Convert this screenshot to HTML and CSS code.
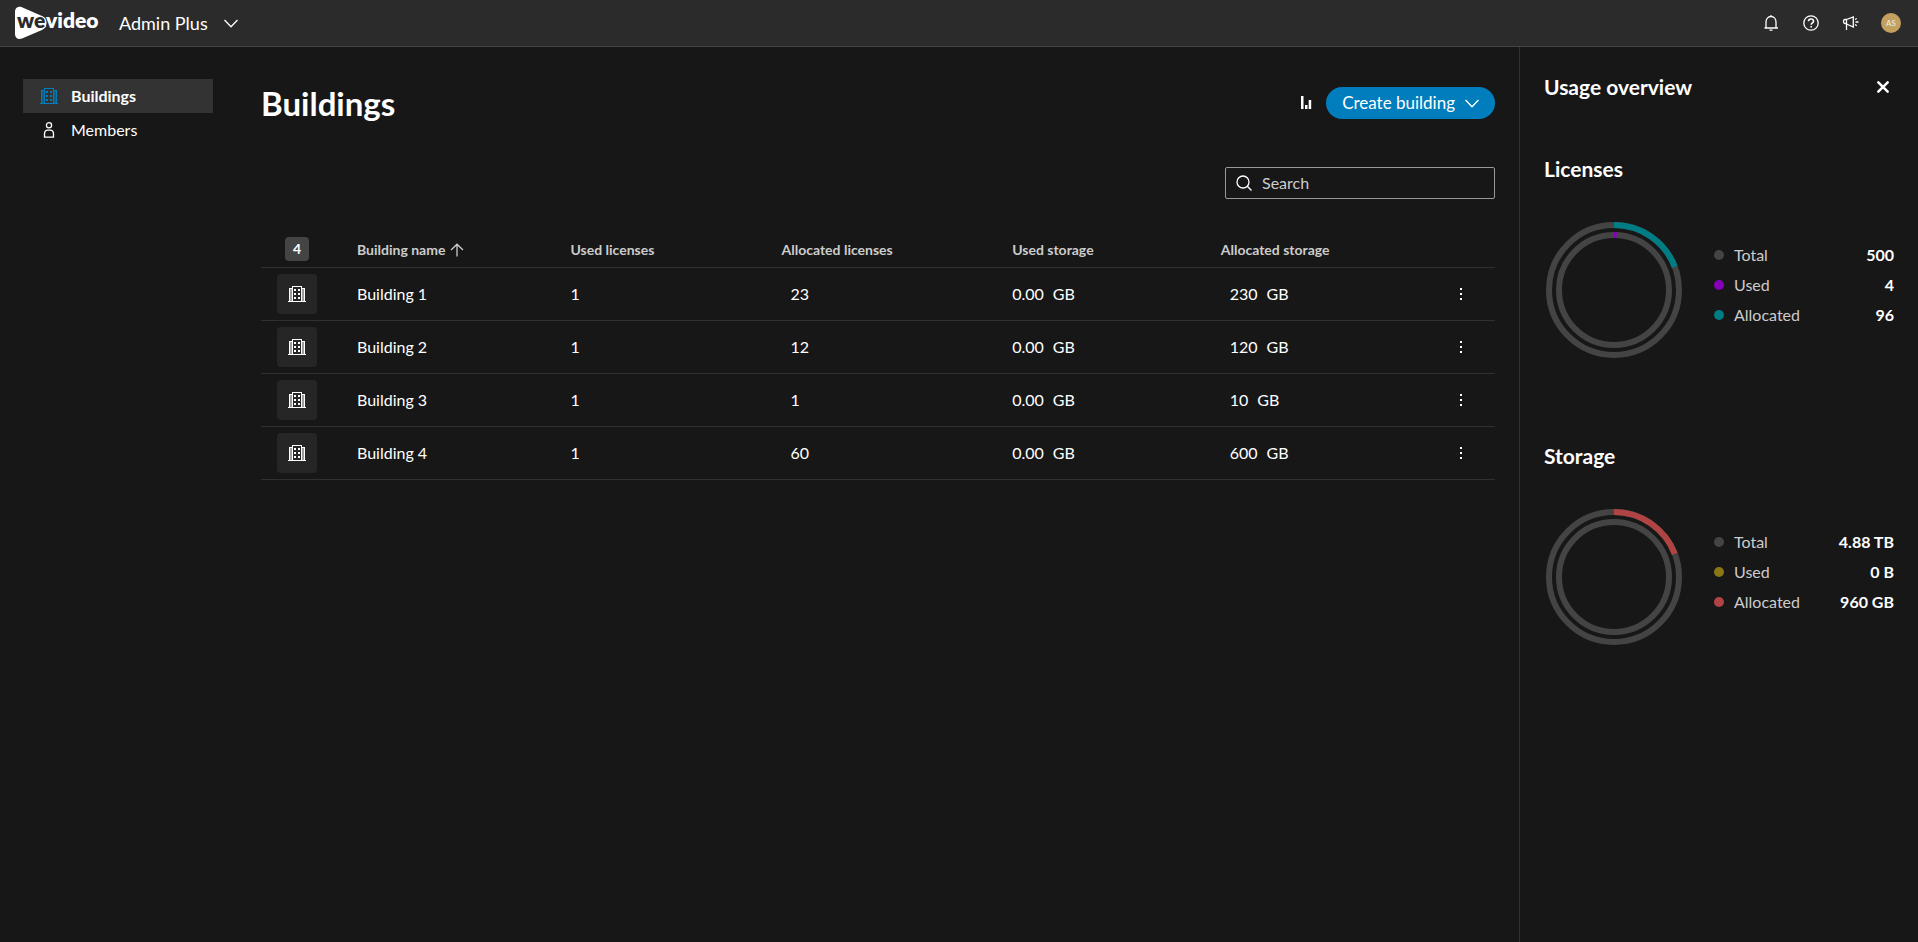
FILE: index.html
```html
<!DOCTYPE html>
<html lang="en">
  <head>
    <meta charset="UTF-8" />
    <meta name="viewport" content="width=device-width, initial-scale=1.0" />
    <title>Buildings - WeVideo</title>
    <link rel="stylesheet" href="styles.css" />
  </head>
  <body>
    <!-- shared icons -->
    <svg width="0" height="0" class="sprite" aria-hidden="true">
      <symbol id="icon-building" viewBox="0 0 20 20">
        <path fill="currentColor" d="M5 2h10v1H5zM5 2h1v15H5zM14 2h1v15h-1zM2 4h3v1H3v12H2zM18 4h-3v1h2v12h1zM1 17h18v1H1z" />
        <path fill="currentColor" d="M7 5h2v2H7zM11 5h2v2h-2zM7 9h2v2H7zM11 9h2v2h-2zM7 13h2v2H7zM11 13h2v2h-2z" />
        <path fill="currentColor" opacity=".55" d="M3 5h2v12H3zM15 5h2v12h-2z" />
      </symbol>
      <symbol id="icon-chevron" viewBox="0 0 14 9">
        <path fill="none" stroke="currentColor" stroke-width="1.300" d="M.5 1 7 7.700 13.500 1" />
      </symbol>
      <symbol id="icon-more" viewBox="0 0 14 14">
        <path fill="currentColor" d="M6 1h2v2H6zM6 6h2v2H6zM6 11h2v2H6z" />
      </symbol>
    </svg>

    <header class="topbar">
      <a href="#" class="logo" aria-label="WeVideo">
        <svg width="86" height="34" viewBox="0 0 86 34">
          <path fill="#fff" d="M0 5.500C0 1.500 3.500 0 7 1.200L27 10c6 3 6 11 0 14L7 32.500C3.500 34 0 32 0 28z" />
          <text x="2" y="22" class="logo-we">we</text>
          <text x="31" y="22" class="logo-video">video</text>
        </svg>
      </a>
      <button class="product-menu">
        Admin Plus
        <svg width="14" height="9"><use href="#icon-chevron" /></svg>
      </button>
      <div class="topbar-actions">
        <button class="icon-button" aria-label="Notifications">
          <svg width="20" height="20" viewBox="0 0 20 20" fill="none" stroke="currentColor" stroke-width="1.300">
            <path d="M3.500 15h13.500M5 14.500V9c0-3 2-5.500 5-5.500S15 6 15 9v5.500l1.500.5M5 14.500l-1.500.5M8.500 17.200h3M10 2v1.500" />
          </svg>
        </button>
        <button class="icon-button" aria-label="Help">
          <svg width="20" height="20" viewBox="0 0 20 20" fill="none" stroke="currentColor" stroke-width="1.300">
            <circle cx="10" cy="10" r="7.200" />
            <path stroke-width="1.600" d="M7.500 8.300C7.500 6.800 8.500 6 10 6s2.500.9 2.500 2.200c0 1.600-2.300 1.700-2.300 3.500M10.200 12.900v1.600" />
          </svg>
        </button>
        <button class="icon-button" aria-label="What's new">
          <svg width="20" height="20" viewBox="0 0 20 20" fill="none" stroke="currentColor" stroke-width="1.300">
            <path d="M5.500 6.500H4C2.800 6.500 2.500 7.300 2.500 8.500s.4 2 1.500 2h1.500M5.500 6.500 12.300 4v10L5.500 11M5.500 6.500v10.500M14 6.500l1.800-1M14.500 9h3M14 11.500l1.800 1.200" />
          </svg>
        </button>
        <button class="avatar">AS</button>
      </div>
    </header>

    <div class="layout">
      <nav class="sidebar">
        <a href="#" class="nav-item active">
          <svg width="20" height="20"><use href="#icon-building" /></svg>
          Buildings
        </a>
        <a href="#" class="nav-item">
          <svg width="20" height="20" viewBox="0 0 20 20" fill="none" stroke="currentColor" stroke-width="1.300">
            <circle cx="10" cy="5.200" r="2.600" />
            <path d="M5.500 17.200v-3c0-2.500 1.500-4 3.200-4h2.600c1.700 0 3.200 1.500 3.200 4v3z" />
          </svg>
          Members
        </a>
      </nav>

      <main class="content">
        <div class="page-header">
          <h1>Buildings</h1>
          <div class="page-actions">
            <button class="icon-button" aria-label="Usage overview">
              <svg width="20" height="20" viewBox="0 0 20 20">
                <path fill="currentColor" d="M5 3h2.500v13H5zM9 12h2.500v4H9zM12.700 7h2.500v9h-2.500z" />
              </svg>
            </button>
            <button class="primary-button">
              Create building
              <svg width="14" height="9"><use href="#icon-chevron" /></svg>
            </button>
          </div>
        </div>

        <label class="search">
          <svg width="16" height="16" viewBox="0 0 16 16" fill="none" stroke="currentColor" stroke-width="1.300">
            <circle cx="7" cy="7" r="6" />
            <path d="m11.300 11.300 4.200 4.200" />
          </svg>
          <input type="text" placeholder="Search" aria-label="Search" />
        </label>

        <table class="buildings">
          <colgroup>
            <col class="col-icon" />
            <col class="col-name" />
            <col class="col-used-licenses" />
            <col class="col-allocated-licenses" />
            <col class="col-used-storage" />
            <col />
            <col class="col-menu" />
          </colgroup>
          <thead>
            <tr>
              <th><span class="count">4</span></th>
              <th>
                <span class="sort">
                  Building name
                  <svg width="14" height="14" viewBox="0 0 14 14" fill="none" stroke="currentColor" stroke-width="1.300">
                    <path d="M7 13.500V1.500M1 7l6-5.800L13 7" />
                  </svg>
                </span>
              </th>
              <th>Used licenses</th>
              <th>Allocated licenses</th>
              <th>Used storage</th>
              <th>Allocated storage</th>
              <th></th>
            </tr>
          </thead>
          <tbody>
            <tr>
              <td><span class="tile"><svg width="20" height="20"><use href="#icon-building" /></svg></span></td>
              <td>Building 1</td>
              <td>1</td>
              <td class="editable">23</td>
              <td><span class="size">0.00 <span>GB</span></span></td>
              <td class="editable"><span class="size">230 <span>GB</span></span></td>
              <td><button class="icon-button" aria-label="More options"><svg width="14" height="14"><use href="#icon-more" /></svg></button></td>
            </tr>
            <tr>
              <td><span class="tile"><svg width="20" height="20"><use href="#icon-building" /></svg></span></td>
              <td>Building 2</td>
              <td>1</td>
              <td class="editable">12</td>
              <td><span class="size">0.00 <span>GB</span></span></td>
              <td class="editable"><span class="size">120 <span>GB</span></span></td>
              <td><button class="icon-button" aria-label="More options"><svg width="14" height="14"><use href="#icon-more" /></svg></button></td>
            </tr>
            <tr>
              <td><span class="tile"><svg width="20" height="20"><use href="#icon-building" /></svg></span></td>
              <td>Building 3</td>
              <td>1</td>
              <td class="editable">1</td>
              <td><span class="size">0.00 <span>GB</span></span></td>
              <td class="editable"><span class="size">10 <span>GB</span></span></td>
              <td><button class="icon-button" aria-label="More options"><svg width="14" height="14"><use href="#icon-more" /></svg></button></td>
            </tr>
            <tr>
              <td><span class="tile"><svg width="20" height="20"><use href="#icon-building" /></svg></span></td>
              <td>Building 4</td>
              <td>1</td>
              <td class="editable">60</td>
              <td><span class="size">0.00 <span>GB</span></span></td>
              <td class="editable"><span class="size">600 <span>GB</span></span></td>
              <td><button class="icon-button" aria-label="More options"><svg width="14" height="14"><use href="#icon-more" /></svg></button></td>
            </tr>
          </tbody>
        </table>
      </main>

      <aside class="usage">
        <div class="usage-header">
          <h2>Usage overview</h2>
          <button class="icon-button" aria-label="Close">
            <svg width="20" height="20" viewBox="0 0 20 20" fill="none" stroke="currentColor" stroke-width="2.500" stroke-linecap="round">
              <path d="m5.300 5.300 9.400 9.400M14.700 5.300l-9.400 9.400" />
            </svg>
          </button>
        </div>

        <section class="usage-section">
          <h2>Licenses</h2>
          <div class="usage-body">
            <svg class="donut" width="140" height="140" viewBox="0 0 140 140">
              <circle class="track" cx="70" cy="70" r="65" />
              <circle class="track" cx="70" cy="70" r="55" />
              <g transform="rotate(-90 70 70)">
                <circle class="licenses-allocated" cx="70" cy="70" r="65" pathLength="500" stroke-dasharray="96 404" />
                <circle class="licenses-used" cx="70" cy="70" r="55" pathLength="500" stroke-dasharray="4 496" />
              </g>
            </svg>
            <dl class="legend">
              <div><dt class="total">Total</dt><dd>500</dd></div>
              <div><dt class="licenses-used">Used</dt><dd>4</dd></div>
              <div><dt class="licenses-allocated">Allocated</dt><dd>96</dd></div>
            </dl>
          </div>
        </section>

        <section class="usage-section">
          <h2>Storage</h2>
          <div class="usage-body">
            <svg class="donut" width="140" height="140" viewBox="0 0 140 140">
              <circle class="track" cx="70" cy="70" r="65" />
              <circle class="track" cx="70" cy="70" r="55" />
              <g transform="rotate(-90 70 70)">
                <circle class="storage-allocated" cx="70" cy="70" r="65" pathLength="500" stroke-dasharray="96 404" />
              </g>
            </svg>
            <dl class="legend">
              <div><dt class="total">Total</dt><dd>4.88 TB</dd></div>
              <div><dt class="storage-used">Used</dt><dd>0 B</dd></div>
              <div><dt class="storage-allocated">Allocated</dt><dd>960 GB</dd></div>
            </dl>
          </div>
        </section>
      </aside>
    </div>
  </body>
</html>
```

FILE: styles.css
```css
* {
  box-sizing: border-box;
}

body {
  margin: 0;
  min-height: 100vh;
  display: flex;
  flex-direction: column;
  background: #171717;
  color: #fff;
  font-family: Lato, "Liberation Sans", sans-serif;
  font-size: 16px;
  line-height: 24px;
}

.sprite {
  position: absolute;
}

svg {
  display: block;
  flex-shrink: 0;
}

h1,
h2,
dl,
dd {
  margin: 0;
}

h2 {
  font-size: 21px;
  line-height: 24px;
}

a {
  color: inherit;
  text-decoration: none;
}

button {
  border: none;
  padding: 0;
  background: none;
  color: inherit;
  font: inherit;
  cursor: pointer;
}

.icon-button {
  display: flex;
}

/* Top bar */
.topbar {
  display: flex;
  align-items: center;
  height: 47px;
  padding: 0 17px 0 15px;
  background: #2b2b2b;
  border-bottom: 1px solid #444;
}

.logo-we,
.logo-video {
  font-size: 21px;
  font-weight: 800;
}

.logo-we {
  fill: #2b2b2b;
  stroke: #fff;
  stroke-width: 2px;
  paint-order: stroke;
}

.logo-video {
  fill: #fff;
}

.product-menu {
  display: flex;
  align-items: center;
  gap: 16px;
  margin-left: 18px;
  font-size: 18px;
}

.topbar-actions {
  display: flex;
  gap: 20px;
  margin-left: auto;
}

.avatar {
  width: 20px;
  height: 20px;
  border-radius: 50%;
  background: #c4a05f;
  color: #eee;
  font-size: 8px;
  line-height: 20px;
}

/* Page layout */
.layout {
  flex: 1;
  display: flex;
}

.sidebar {
  width: 190px;
  margin: 32px 24px 0 23px;
}

.nav-item {
  display: flex;
  align-items: center;
  gap: 12px;
  height: 34px;
  padding: 0 16px;
}

.nav-item.active {
  background: #333;
  font-weight: 700;
}

.nav-item.active svg {
  color: #007dbc;
}

.content {
  flex: 1;
  padding: 32px 24px;
}

.page-header {
  display: flex;
  align-items: center;
  justify-content: space-between;
  height: 48px;
}

h1 {
  font-size: 33px;
  line-height: 48px;
}

.page-actions {
  display: flex;
  align-items: center;
  gap: 10px;
}

.primary-button {
  display: flex;
  align-items: center;
  gap: 10px;
  height: 32px;
  padding: 0 16px;
  border-radius: 16px;
  background: #007dbc;
  font-size: 17px;
}

.search {
  display: flex;
  align-items: center;
  gap: 10px;
  width: 270px;
  height: 32px;
  margin: 40px 0 32px auto;
  padding: 0 10px;
  border: 1px solid #999;
  border-radius: 2px;
}

.search input {
  flex: 1;
  min-width: 0;
  padding: 0;
  border: none;
  outline: none;
  background: none;
  color: #fff;
  font: inherit;
}

.search input::placeholder {
  color: #ccc;
}

/* Buildings table */
.buildings {
  width: 100%;
  table-layout: fixed;
  border-collapse: collapse;
}

.col-icon {
  width: 96px;
}

.col-name {
  width: 17.3%;
}

.col-used-licenses {
  width: 17.1%;
}

.col-allocated-licenses {
  width: 18.7%;
}

.col-used-storage {
  width: 16.9%;
}

.col-menu {
  width: 41px;
}

.buildings th,
.buildings td {
  padding: 0;
  text-align: left;
  border-bottom: 1px solid #303030;
}

.buildings th {
  height: 36px;
  padding-top: 2px;
  color: #ccc;
  font-size: 14px;
}

.buildings th:first-child {
  padding-top: 0;
}

.buildings td {
  height: 53px;
}

.buildings .editable {
  padding-left: 9px;
}

.count,
.tile {
  display: flex;
  align-items: center;
  justify-content: center;
  border-radius: 4px;
}

.count {
  width: 24px;
  height: 24px;
  margin-left: 24px;
  background: #444;
  color: #fff;
}

.tile {
  width: 40px;
  height: 40px;
  margin-left: 16px;
  background: #262626;
}

.sort {
  display: flex;
  align-items: center;
  gap: 5px;
}

.size {
  display: flex;
  gap: 9px;
}

/* Usage panel */
.usage {
  width: 399px;
  padding: 24px;
  border-left: 1px solid #303030;
}

.usage-header {
  display: flex;
  align-items: center;
  justify-content: space-between;
  height: 32px;
  margin-bottom: 54px;
}

.usage-header .icon-button {
  margin-right: 1px;
}

.usage-section {
  margin-bottom: 84px;
}

.usage-body {
  display: flex;
  align-items: center;
  margin-top: 39px;
}

.donut {
  fill: none;
  stroke-width: 6;
}

.track {
  stroke: #444;
}

.legend {
  flex: 1;
  padding: 0 0 10px 30px;
}

.legend div {
  display: flex;
  align-items: center;
  justify-content: space-between;
  height: 30px;
}

.legend dt {
  display: flex;
  align-items: center;
  gap: 10px;
  color: #ccc;
}

.legend dt::before {
  content: "";
  width: 10px;
  height: 10px;
  border-radius: 50%;
  background: #444;
}

.legend dd {
  font-weight: 700;
}

circle.licenses-used {
  stroke: #8700b8;
}

circle.licenses-allocated {
  stroke: #007c84;
}

circle.storage-allocated {
  stroke: #b04343;
}

.legend .licenses-used::before {
  background: #8700b8;
}

.legend .licenses-allocated::before {
  background: #007c84;
}

.legend .storage-used::before {
  background: #8a7615;
}

.legend .storage-allocated::before {
  background: #b04343;
}
```
